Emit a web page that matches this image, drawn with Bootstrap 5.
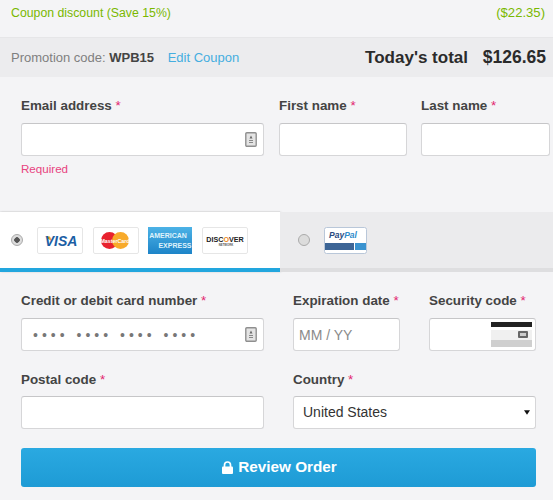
<!DOCTYPE html>
<html lang="en"><head><meta charset="utf-8"><title>Checkout</title>
<link href="https://cdn.jsdelivr.net/npm/bootstrap@5.3.0/dist/css/bootstrap.min.css" rel="stylesheet">
<style>
html,body{height:500px;overflow:hidden}
body{background:#f4f4f6;font-family:"Liberation Sans",Arial,sans-serif;color:#444;font-size:13px}
.coupon-row{height:37px;padding:4px 8px 0 11px;color:#7ab800;font-size:13.1px;line-height:17px}
.coupon-name{font-size:12.3px}
.promo-bar{height:40px;background:#ececee;border-top:1px solid #e6e6e8;padding:0 7px 0 11px}
.promo-text{color:#808080;font-size:13px}
.promo-text b{color:#444}
.promo-text a{color:#45aee0;text-decoration:none;margin-left:10px}
.total-text{font-size:17px;font-weight:700;color:#2b2b2b}
.total-text span{margin-left:10px;font-size:17.5px}
.fields-one{padding:21px 0 0 21px;height:135px;gap:15px}
.fld-email{width:243px}.fld-first{width:128px}.fld-last{width:129px;margin-left:-1px}
.fld-label{font-weight:700;font-size:13.4px;line-height:16px;color:#444;margin-bottom:9px;display:block;white-space:nowrap}
.fld-label i{color:#e2246f;font-style:normal;font-weight:400}
.fld-input.form-control,.fld-input.form-select{height:33px;min-height:33px;border:1px solid #d6d6d8;border-top-color:#c6c6c8;border-radius:3px;padding:0 10px;font-size:14px;color:#333;background-color:#fff;box-shadow:none}
.fld-input::placeholder{color:#8a8a8a}
.fld-input.card-dots{padding-left:11px}
.fld-input.card-dots::placeholder{color:#777;letter-spacing:4px}
.fld-input.exp-input{padding-left:5px}
.err-text{color:#e8437f;font-size:11.6px;line-height:14px;margin-top:6px}
.pay-tabs{height:60px}
.pay-tab{height:60px}
.pay-on{width:280px;background:#fff;border-bottom:4px solid #22a6de;padding-left:11px;box-shadow:1px 0 2px rgba(0,0,0,.15),0 -1px 1px rgba(0,0,0,.04)}
.pay-off{flex:1;background:#ebebed;border-bottom:4px solid #dedee0;padding-left:18px}
.radio-dot{width:12px;height:12px;border-radius:50%;border:1px solid #aaa;background:#dcdcdc;flex:none}
.pay-on .radio-dot{margin-right:14px;background:radial-gradient(circle,#555 0 2.5px,#ddd 3px)}
.pay-off .radio-dot{margin-right:14px}
.card-logo{display:block;width:46px;height:27px;flex:none}
.logo-narrow{width:44px}
.logo-paypal{width:43px}
.logo-row{gap:9.5px}
.fields-two{padding:21px 17px 0 21px}
.fld-ccnum{width:243px}.fld-exp{width:107px;margin-left:29px}.fld-sec{width:107px;margin-left:29px}
.fld-postal{width:243px}.fld-country{width:243px;margin-left:29px}
.row-top{margin-bottom:21px}
.row-low{margin-bottom:19px}
.row-low .fld-label{margin-bottom:8px}
.has-icon{position:relative}
.has-icon svg{position:absolute;right:7px;top:9px}
.has-icon svg.sec-art{right:4px;top:4px;width:41px;height:25px}
.fld-input.fld-select.form-select{padding:0 20px 0 9px;background-image:url("data:image/svg+xml,%3csvg xmlns='http://www.w3.org/2000/svg' viewBox='0 0 8 6'%3e%3cpath d='M0 0h8L4 6z' fill='%23111'/%3e%3c/svg%3e");background-size:6px 5px;background-position:right 5px center}
.btn-review.btn{height:39px;width:515px;border:0;border-radius:3px;background:linear-gradient(#2aa9e1,#1e9bd5);color:#fff;font-weight:700;font-size:15.3px;padding:0 0 0 2px;display:flex;align-items:center;justify-content:center;gap:5px}
</style></head>
<body>
<div class="coupon-row d-flex justify-content-between align-items-baseline"><span class="coupon-name">Coupon discount (Save 15%)</span><span>($22.35)</span></div>
<div class="promo-bar d-flex justify-content-between align-items-center">
  <div class="promo-text">Promotion code: <b>WPB15</b> <a href="#">Edit Coupon</a></div>
  <div class="total-text">Today's total <span>$126.65</span></div>
</div>
<form>
<div class="fields-one d-flex">
  <div class="fld-email"><label class="fld-label">Email address <i>*</i></label>
    <div class="has-icon"><input class="form-control fld-input">
      <svg width="12" height="15" viewBox="0 0 12 15"><rect x=".8" y=".8" width="10.4" height="13.4" rx="1" fill="#e4e4e4" stroke="#8f8f8f" stroke-width="1.4"/><path d="M6 3.5l1.5 3H4.5z" fill="#666"/><path d="M4 8h4v1H4zM4 10h4v1H4z" fill="#888"/></svg></div>
    <div class="err-text">Required</div></div>
  <div class="fld-first"><label class="fld-label">First name <i>*</i></label><input class="form-control fld-input"></div>
  <div class="fld-last"><label class="fld-label">Last name <i>*</i></label><input class="form-control fld-input"></div>
</div>
<div class="pay-tabs d-flex">
  <div class="pay-tab pay-on d-flex align-items-center">
    <span class="radio-dot"></span>
    <div class="logo-row d-flex">
      <svg class="card-logo" viewBox="0 0 46 27"><rect x=".5" y=".5" width="45" height="26" rx="1.5" fill="#fff" stroke="#e6e6e6"/><path d="M8 9.5h5l2 5z" fill="#f0a030"/><text x="24" y="19" text-anchor="middle" font-family="Liberation Sans" font-size="14" font-weight="700" font-style="italic" fill="#1b5ea4">VISA</text></svg>
      <svg class="card-logo" viewBox="0 0 46 27"><rect x=".5" y=".5" width="45" height="26" rx="1.5" fill="#fff" stroke="#e6e6e6"/><circle cx="16.5" cy="13.5" r="8.5" fill="#e8222e"/><circle cx="27.5" cy="13.5" r="8.5" fill="#f8aa2a"/><text x="22" y="15.5" text-anchor="middle" font-family="Liberation Sans" font-size="5.3" font-weight="700" fill="#fff">MasterCard</text></svg>
      <svg class="card-logo logo-narrow" viewBox="0 0 44 27"><defs><linearGradient id="ax" x1="0" y1="0" x2="0" y2="1"><stop offset="0" stop-color="#4cb2e6"/><stop offset="1" stop-color="#1d84c8"/></linearGradient></defs><rect width="44" height="27" fill="url(#ax)"/><text x="20" y="11" text-anchor="middle" font-family="Liberation Sans" font-size="7" font-weight="700" fill="#dff2fb">AMERICAN</text><text x="27" y="20.5" text-anchor="middle" font-family="Liberation Sans" font-size="7" font-weight="700" fill="#dff2fb">EXPRESS</text></svg>
      <svg class="card-logo" viewBox="0 0 46 27"><rect x=".5" y=".5" width="45" height="26" rx="1.5" fill="#fff" stroke="#e6e6e6"/><text x="23" y="14.5" text-anchor="middle" font-family="Liberation Sans" font-size="7.2" font-weight="700" fill="#222">DISC<tspan fill="#ee8a22">O</tspan>VER</text><text x="24" y="19" text-anchor="middle" font-family="Liberation Sans" font-size="2.8" font-weight="700" fill="#555">NETWORK</text></svg>
    </div>
  </div>
  <div class="pay-tab pay-off d-flex align-items-center">
    <span class="radio-dot"></span>
    <svg class="card-logo logo-paypal" viewBox="0 0 43 27"><rect x=".5" y=".5" width="42" height="26" rx="2" fill="#fff" stroke="#b9c7d9"/><text x="5" y="11" font-family="Liberation Sans" font-size="8.5" font-weight="700" font-style="italic" fill="#2a4a80">Pay<tspan fill="#2f8ccb">Pal</tspan></text><rect x="1" y="16" width="29" height="7" fill="#3d6596"/><rect x="31" y="16" width="11" height="7" fill="#3a93d0"/></svg>
  </div>
</div>
<div class="fields-two">
  <div class="row-top d-flex">
    <div class="fld-ccnum"><label class="fld-label">Credit or debit card number <i>*</i></label>
      <div class="has-icon"><input class="form-control fld-input card-dots" placeholder="•••• •••• •••• ••••">
      <svg width="12" height="15" viewBox="0 0 12 15"><rect x=".8" y=".8" width="10.4" height="13.4" rx="1" fill="#e4e4e4" stroke="#8f8f8f" stroke-width="1.4"/><path d="M6 3.5l1.5 3H4.5z" fill="#666"/><path d="M4 8h4v1H4zM4 10h4v1H4z" fill="#888"/></svg></div></div>
    <div class="fld-exp"><label class="fld-label">Expiration date <i>*</i></label><input class="form-control fld-input exp-input" placeholder="MM / YY"></div>
    <div class="fld-sec"><label class="fld-label">Security code <i>*</i></label>
      <div class="has-icon"><input class="form-control fld-input">
        <svg class="sec-art" viewBox="0 0 41 25"><rect width="41" height="25" fill="#f0f0f0"/><rect width="41" height="5" fill="#222"/><rect y="5" width="41" height="3" fill="#fff"/><rect y="18" width="41" height="7" fill="#cfcfcf"/><rect x="27" y="9" width="10" height="7" rx="1" fill="#666"/><rect x="29" y="11" width="6" height="3" fill="#ccc"/></svg></div></div>
  </div>
  <div class="row-low d-flex">
    <div class="fld-postal"><label class="fld-label">Postal code <i>*</i></label><input class="form-control fld-input"></div>
    <div class="fld-country"><label class="fld-label">Country <i>*</i></label>
      <select class="form-select fld-input fld-select"><option>United States</option></select></div>
  </div>
  <button type="button" class="btn btn-review"><svg width="11" height="13" viewBox="0 0 11 13"><path d="M2.5 6V4a3 3 0 016 0v2" fill="none" stroke="#fff" stroke-width="1.7"/><rect y="5.5" width="11" height="7.5" rx="1" fill="#fff"/></svg>Review Order</button>
</div>
</form>
<script src="https://cdn.jsdelivr.net/npm/bootstrap@5.3.0/dist/js/bootstrap.bundle.min.js"></script>
</body></html>
